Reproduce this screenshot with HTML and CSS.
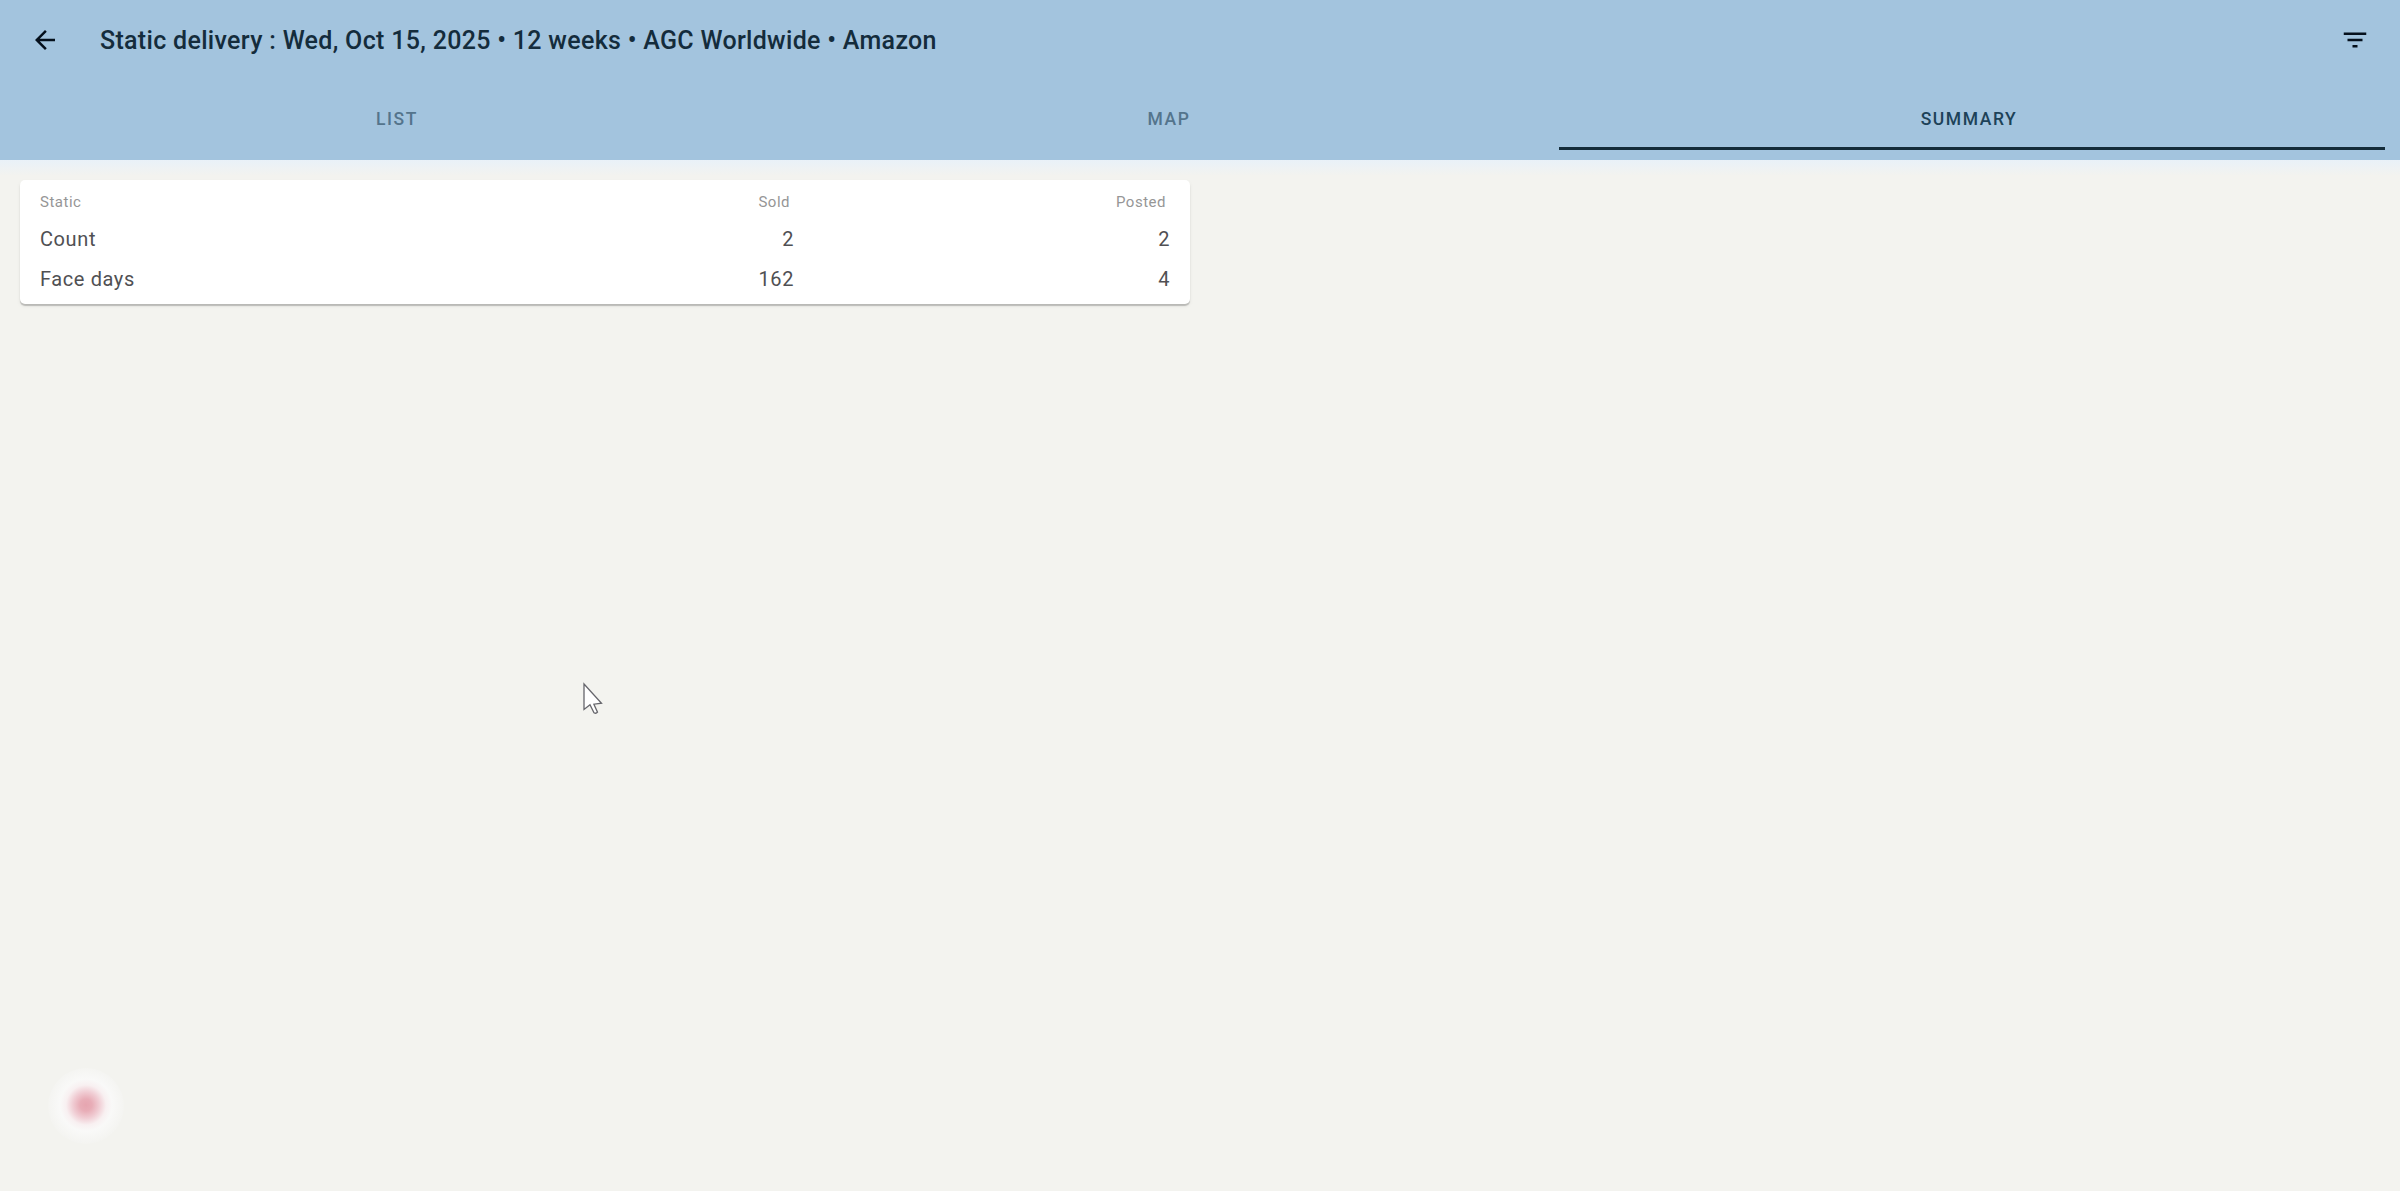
FILE: index.html
```html
<!DOCTYPE html>
<html lang="en">
<head>
  <meta charset="UTF-8">
  <meta name="viewport" content="width=device-width, initial-scale=1.0">
  <title>Static delivery</title>
  <link rel="stylesheet" href="styles.css">
</head>
<body>
  <header class="header">
    <div class="toolbar">
      <button class="icon-btn" aria-label="Back">
        <svg class="icon" viewBox="0 0 24 24"><path d="M20 11H7.83l5.59-5.59L12 4l-8 8 8 8 1.41-1.41L7.83 13H20v-2z"/></svg>
      </button>
      <h1 class="title">Static delivery : Wed, Oct 15, 2025 • 12 weeks • AGC Worldwide • Amazon</h1>
      <button class="icon-btn filter-btn" aria-label="Filter">
        <svg class="icon" viewBox="0 0 24 24"><path d="M10 18h4v-2h-4v2zM3 6v2h18V6H3zm3 7h12v-2H6v2z"/></svg>
      </button>
    </div>
    <nav class="tabs">
      <a class="tab">LIST</a>
      <a class="tab">MAP</a>
      <a class="tab active">SUMMARY</a>
    </nav>
  </header>

  <main>
    <div class="card">
      <div class="row labels">
        <span>Static</span>
        <span class="num">Sold</span>
        <span class="num">Posted</span>
      </div>
      <div class="row">
        <span>Count</span>
        <span class="num">2</span>
        <span class="num">2</span>
      </div>
      <div class="row">
        <span>Face days</span>
        <span class="num">162</span>
        <span class="num">4</span>
      </div>
    </div>
  </main>

  <div class="record"></div>

  <svg class="cursor" viewBox="0 0 22 36"><path d="M2 2V27.500l6-4.800 4 8q2 1.300 3.500-.5l-3.600-8 7.600-1z"/></svg>
</body>
</html>
```

FILE: styles.css
```css
* {
  box-sizing: border-box;
}
body {
  margin: 0;
  min-height: 100vh;
  overflow: hidden;
  background-color: #f3f3ef;
  font-family: Roboto, sans-serif;
  color: #505053;
}
.header {
  height: 160px;
  background-color: #a3c4de;
}
.toolbar {
  display: flex;
  align-items: center;
  height: 80px;
  padding: 0 30px;
}
.icon-btn {
  display: flex;
  padding: 0;
  border: none;
  background: none;
  cursor: pointer;
}
.icon {
  width: 30px;
  height: 30px;
  fill: #05101c;
}
.filter-btn {
  margin-left: auto;
}
.title {
  margin: 0 0 0 40px;
  font-size: 25px;
  font-weight: 500;
  letter-spacing: 0.31px;
  color: #142c3c;
}
.tabs {
  display: grid;
  grid-template-columns: 764fr 780fr 826fr;
  height: 70px;
  padding: 0 15px;
}
.tab {
  padding-top: 28px;
  border-bottom: 3px solid transparent;
  text-align: center;
  font-size: 17.5px;
  line-height: 22px;
  font-weight: 500;
  letter-spacing: 1.56px;
  color: #54748c;
}
.tab.active {
  padding-right: 6px;
  color: #1d4258;
  border-color: #142c3a;
}
main {
  padding: 20px;
  background: linear-gradient(#e9f1f8, #f3f3ef 16px);
}
.card {
  width: 1170px;
  height: 124px;
  padding: 9px 20px 0;
  background-color: #fff;
  border-radius: 5px;
  box-shadow: 0 2px 1px rgba(0, 0, 0, 0.2), 0 2px 4px rgba(0, 0, 0, 0.06);
}
.row {
  display: grid;
  grid-template-columns: 379px 375px 376px;
  line-height: 40px;
  font-size: 20px;
  letter-spacing: 0.6px;
}
.labels {
  margin-bottom: 3px;
  line-height: 27px;
  font-size: 15px;
  letter-spacing: 0.5px;
  color: #969696;
}
.num {
  text-align: right;
}
.labels .num {
  padding-right: 4px;
}
.record {
  position: absolute;
  left: 48px;
  top: 1068px;
  width: 76px;
  height: 76px;
  border-radius: 50%;
  background: radial-gradient(circle at 38px 37px, #e6a5b0 0, #e8adb7 6px, #f0ccd3 13px, #f8f0f1 20px, #f9f9f8 26px, #f4f4f1 38px);
}
.cursor {
  position: absolute;
  left: 582px;
  top: 682px;
  width: 22px;
  height: 36px;
  fill: #fff;
  stroke: #66666c;
  stroke-width: 1.3;
}
```
